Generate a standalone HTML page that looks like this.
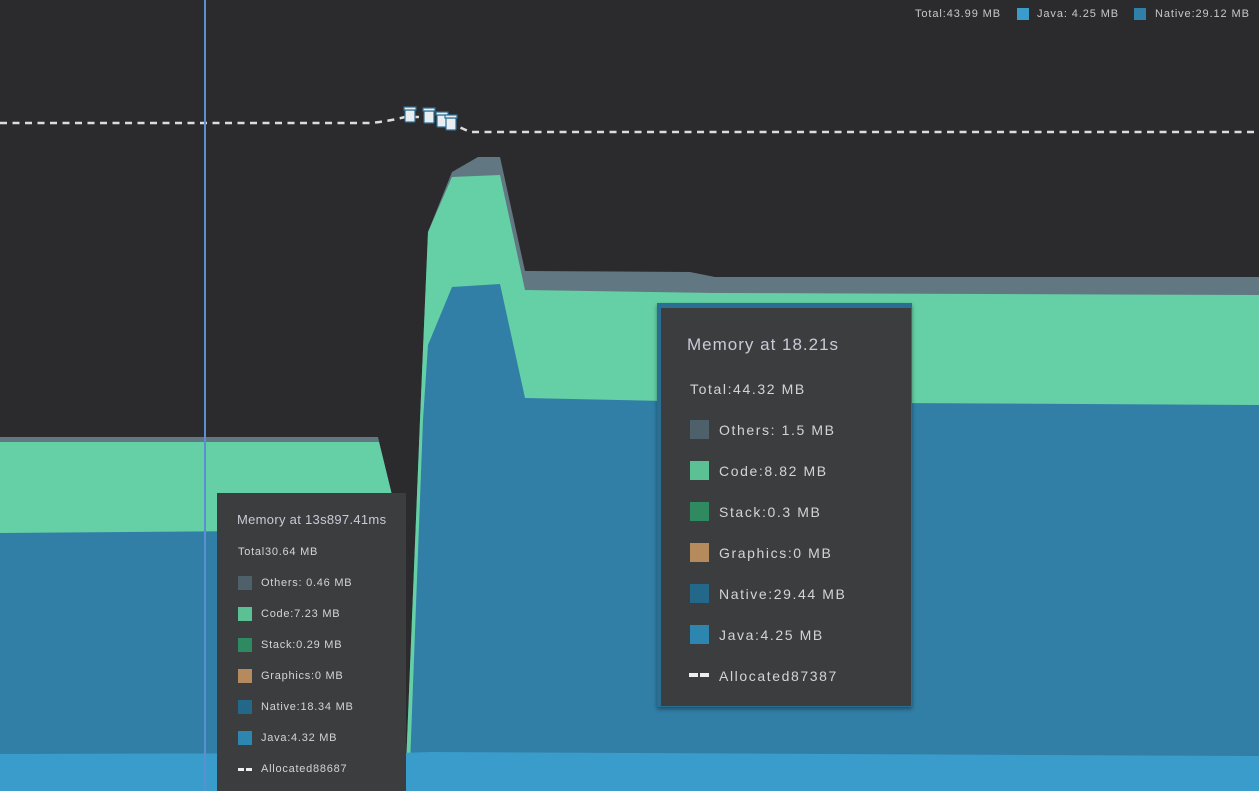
<!DOCTYPE html>
<html><head><style>
body{margin:0;width:1259px;height:791px;overflow:hidden;background:#2b2b2d;font-family:"Liberation Sans",sans-serif;position:relative}
svg{position:absolute;left:0;top:0}
.tt{position:absolute;background:#3c3d3f;color:#d4d4d4}
.row{position:absolute;white-space:nowrap}
.sw{position:absolute}
.lg{position:absolute;top:8px;font-size:11px;color:#c8c8c8;white-space:nowrap;letter-spacing:0.9px}
</style></head><body>
<svg width="1259" height="791" viewBox="0 0 1259 791">
<polygon points="0,437 378,437 392,495 392,791 0,791" fill="#617883"/>
<polygon points="0,442 379,442 392,495 392,791 0,791" fill="#65d0a5"/>
<polygon points="0,533 392,530 392,791 0,791" fill="#317ea6"/>
<polygon points="405,791 420,420 428,232 452,172 478,157 500,157 525,271 690,272 715,277 1259,277 1259,791" fill="#617883"/>
<polygon points="405,791 420,420 428,232 452,177 500,175 525,290 715,293 1259,295 1259,791" fill="#65d0a5"/>
<polygon points="409,791 423,420 428,345 452,287 500,284 525,398 715,402 1259,405 1259,791" fill="#317ea6"/>
<path d="M0,754 L400,753 L430,752 L1259,756 L1259,791 L0,791Z" fill="#3a9ccb"/>
<path d="M0,123 L370,123 Q390,121 405,117 L418,117 L430,119 L455,125 L470,132 L1259,132" fill="none" stroke="#dcdcdc" stroke-width="2.5" stroke-dasharray="7,5.5"/>
<g fill="#e8eef2" stroke="#2f6e93" stroke-width="1.2">
<rect x="405" y="110" width="10" height="12" rx="1"/><rect x="404" y="107" width="12" height="3"/>
<rect x="424" y="111" width="10" height="12" rx="1"/><rect x="423" y="108" width="12" height="3"/>
<rect x="437" y="115" width="10" height="12" rx="1"/><rect x="436" y="112" width="12" height="3"/>
<rect x="446" y="118" width="10" height="12" rx="1"/><rect x="445" y="115" width="12" height="3"/>
</g>
<rect x="204" y="0" width="2" height="791" fill="#5b8fd3"/>
</svg>
<div class="lg" style="left:915px">Total:43.99 MB</div>
<div style="position:absolute;top:8px;left:1017px;width:12px;height:12px;background:#3a9ccb"></div>
<div class="lg" style="left:1037px">Java: 4.25 MB</div>
<div style="position:absolute;top:8px;left:1134px;width:12px;height:12px;background:#2f7fa8"></div>
<div class="lg" style="left:1155px">Native:29.12 MB</div>

<div class="tt" style="left:217px;top:493px;width:189px;height:298px;font-size:11px;letter-spacing:0.75px">
<div class="row" style="left:20px;top:19px;font-size:13px;color:#c8cbd8;letter-spacing:0.3px">Memory at 13s897.41ms</div>
<div class="row" style="left:21px;top:53px">Total30.64 MB</div>
<div class="sw" style="left:21px;top:83px;width:14px;height:14px;background:#4e606a"></div><div class="row" style="left:44px;top:84px">Others: 0.46 MB</div>
<div class="sw" style="left:21px;top:114px;width:14px;height:14px;background:#5cc095"></div><div class="row" style="left:44px;top:115px">Code:7.23 MB</div>
<div class="sw" style="left:21px;top:145px;width:14px;height:14px;background:#2f8a62"></div><div class="row" style="left:44px;top:146px">Stack:0.29 MB</div>
<div class="sw" style="left:21px;top:176px;width:14px;height:14px;background:#b58a5d"></div><div class="row" style="left:44px;top:177px">Graphics:0 MB</div>
<div class="sw" style="left:21px;top:207px;width:14px;height:14px;background:#236789"></div><div class="row" style="left:44px;top:208px">Native:18.34 MB</div>
<div class="sw" style="left:21px;top:238px;width:14px;height:14px;background:#2d86b0"></div><div class="row" style="left:44px;top:239px">Java:4.32 MB</div>
<div class="sw" style="left:21px;top:275px;width:6px;height:3px;background:#eee"></div><div class="sw" style="left:29px;top:275px;width:6px;height:3px;background:#eee"></div><div class="row" style="left:44px;top:270px">Allocated88687</div>
</div>

<div style="position:absolute;left:657px;top:303px;width:255px;height:404px;background:#2a6e94;box-shadow:0 2px 4px rgba(0,0,0,.4)"></div>
<div class="tt" style="left:661px;top:308px;width:250px;height:398px;font-size:14px;letter-spacing:1.6px">
<div class="row" style="left:26px;top:27px;font-size:17px;color:#c8cbd8;letter-spacing:1px">Memory at 18.21s</div>
<div class="row" style="left:29px;top:73px">Total:44.32 MB</div>
<div class="sw" style="left:29px;top:112px;width:19px;height:19px;background:#4e606a"></div><div class="row" style="left:58px;top:114px">Others: 1.5 MB</div>
<div class="sw" style="left:29px;top:153px;width:19px;height:19px;background:#5cc095"></div><div class="row" style="left:58px;top:155px">Code:8.82 MB</div>
<div class="sw" style="left:29px;top:194px;width:19px;height:19px;background:#2f8a62"></div><div class="row" style="left:58px;top:196px">Stack:0.3 MB</div>
<div class="sw" style="left:29px;top:235px;width:19px;height:19px;background:#b58a5d"></div><div class="row" style="left:58px;top:237px">Graphics:0 MB</div>
<div class="sw" style="left:29px;top:276px;width:19px;height:19px;background:#236789"></div><div class="row" style="left:58px;top:278px">Native:29.44 MB</div>
<div class="sw" style="left:29px;top:317px;width:19px;height:19px;background:#2d86b0"></div><div class="row" style="left:58px;top:319px">Java:4.25 MB</div>
<div class="sw" style="left:28px;top:365px;width:9px;height:4px;background:#eee"></div><div class="sw" style="left:39px;top:365px;width:9px;height:4px;background:#eee"></div><div class="row" style="left:58px;top:360px">Allocated87387</div>
</div>
</body></html>
